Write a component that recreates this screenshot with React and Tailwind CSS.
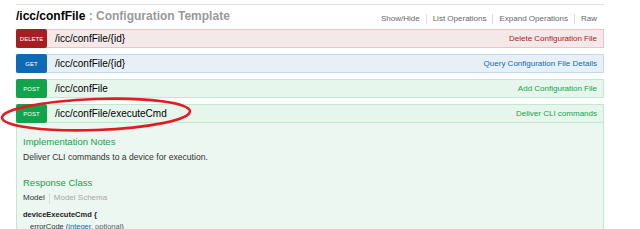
import React from "react";

const ops = [
  {
    method: "DELETE",
    path: "/icc/confFile/{id}",
    desc: "Delete Configuration File",
    row: "bg-[#f5e8e8] border-[#e8c6c7]",
    badge: "bg-[#a41e22]",
    text: "text-[#a41e22]",
  },
  {
    method: "GET",
    path: "/icc/confFile/{id}",
    desc: "Query Configuration File Details",
    row: "bg-[#e7f0f7] border-[#c3d9ec]",
    badge: "bg-[#0f6ab4]",
    text: "text-[#0f6ab4]",
  },
  {
    method: "POST",
    path: "/icc/confFile",
    desc: "Add Configuration File",
    row: "bg-[#e7f6ec] border-[#c3e8d1]",
    badge: "bg-[#10a54a]",
    text: "text-[#10a54a]",
  },
];

function OpRow({ op, last }) {
  return (
    <div
      className={`flex items-center h-[19px] border ${op.row} ${last ? "" : "mb-[6px]"}`}
    >
      <div
        className={`${op.badge} -my-px -ml-px h-[19px] w-[31px] rounded-[2px] flex items-center justify-center text-white text-[6px] leading-none`}
      >
        {op.method}
      </div>
      <div className="ml-[8px] text-[10px] leading-none text-black">{op.path}</div>
      <div className={`ml-auto pr-[6px] text-[8px] leading-none ${op.text}`}>{op.desc}</div>
    </div>
  );
}

export default function App() {
  return (
    <div
      className="relative w-[640px] h-[229px] overflow-hidden bg-white"
      style={{ fontFamily: '"Liberation Sans", Arial, sans-serif' }}
    >
      <div className="pt-[4px] px-[16px] w-[620px]">
        <div className="border-t border-[#ddd]">
          <div className="flex items-center justify-between h-[24px]">
            <div className="text-[12px] font-bold leading-none -mt-[2px]">
              <span className="text-black">/icc/confFile</span>
              <span className="text-[#999]"> : Configuration Template</span>
            </div>
            <div className="flex items-center text-[8px] leading-none text-[#666] pr-[7px] mt-[3px]">
              <span>Show/Hide</span>
              <span className="mx-[6px] w-px h-[10px] bg-[#ddd]" />
              <span>List Operations</span>
              <span className="mx-[6px] w-px h-[10px] bg-[#ddd]" />
              <span>Expand Operations</span>
              <span className="mx-[6px] w-px h-[10px] bg-[#ddd]" />
              <span>Raw</span>
            </div>
          </div>
          {ops.map((op, i) => (
            <OpRow key={i} op={op} />
          ))}
          <div>
            <OpRow
              last
              op={{
                method: "POST",
                path: "/icc/confFile/executeCmd",
                desc: "Deliver CLI commands",
                row: "bg-[#e7f6ec] border-[#c3e8d1]",
                badge: "bg-[#10a54a]",
                text: "text-[#10a54a]",
              }}
            />
            <div className="bg-[#ebf7f0] border border-t-0 border-[#c3e8d1] h-[120px] px-[6px] pt-[13px]">
              <div className="text-[9.5px] leading-[12px] text-[#10a54a]">Implementation Notes</div>
              <div className="mt-[3px] text-[8.6px] leading-[12px] text-[#333]">
                Deliver CLI commands to a device for execution.
              </div>
              <div className="mt-[14px] text-[9.5px] leading-[12px] text-[#10a54a]">Response Class</div>
              <div className="mt-[3px] flex items-center text-[8px] leading-[12px]">
                <span className="text-[#333]">Model</span>
                <span className="mx-[4px] w-px h-[11px] bg-[#ddd]" />
                <span className="text-[#aaa]">Model Schema</span>
              </div>
              <div className="mt-[5px] text-[7.5px] leading-[12px] font-bold text-[#222]">
                deviceExecuteCmd {"{"}
              </div>
              <div className="pl-[7px] text-[7.5px] leading-[12px] text-[#333]">
                errorCode (<span className="text-[#0f6ab4]">integer</span>, <span className="text-[#666]">optional</span>)
              </div>
            </div>
          </div>
        </div>
      </div>
      <svg
        className="absolute left-0 top-[95px] pointer-events-none"
        width="200"
        height="40"
        viewBox="0 0 200 40"
      >
        <ellipse
          cx="96"
          cy="19.5"
          rx="94"
          ry="15.5"
          transform="rotate(-2 96 19.5)"
          fill="none"
          stroke="#e31b23"
          strokeWidth="2.6"
        />
      </svg>
    </div>
  );
}
